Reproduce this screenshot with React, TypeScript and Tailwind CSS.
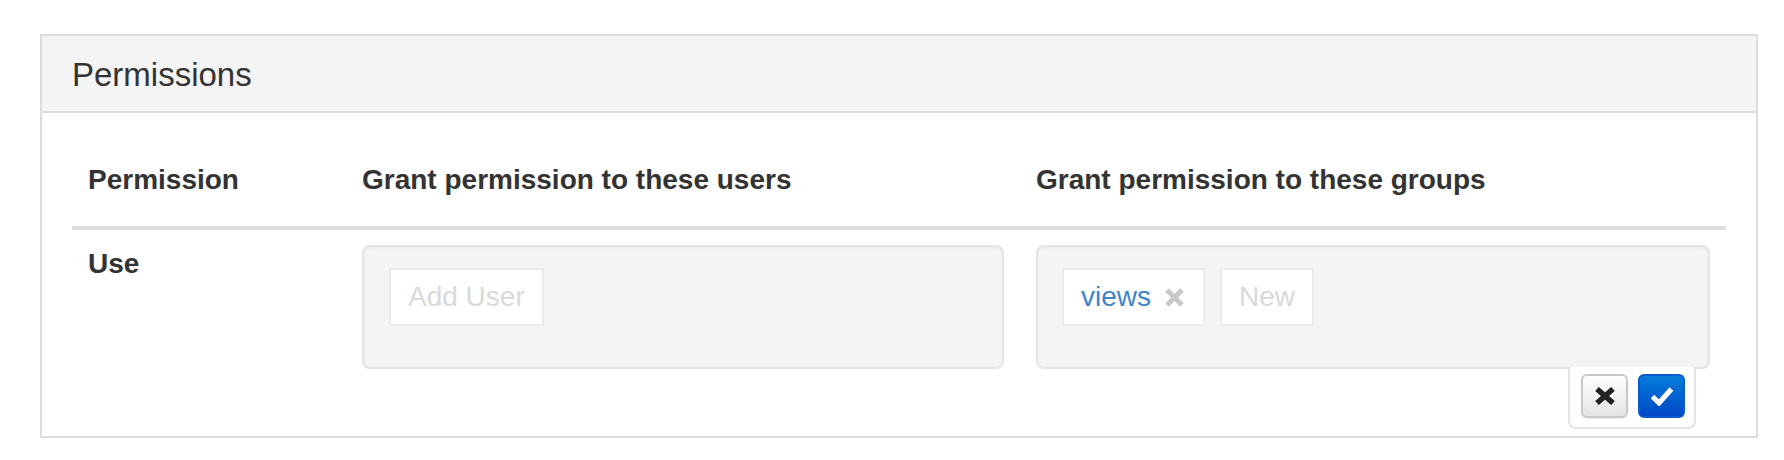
import React from "react";

const font = { fontFamily: '"Liberation Sans", Arial, sans-serif' };

function TagX() {
  return (
    <svg width="21" height="21" viewBox="0 0 21 21" className="shrink-0">
      <path d="M3 3 L18 18 M18 3 L3 18" stroke="#c9c9c9" strokeWidth="5" />
    </svg>
  );
}

function BoldX() {
  return (
    <svg width="22" height="18" viewBox="0 0 22 18">
      <path d="M3 2 L19 16 M19 2 L3 16" stroke="#222" strokeWidth="5.5" />
    </svg>
  );
}

function Check() {
  return (
    <svg width="24" height="20" viewBox="0 0 24 20">
      <path d="M2.5 10.5 L9 17 L21.5 3" stroke="#fff" strokeWidth="5" fill="none" strokeLinejoin="miter" />
    </svg>
  );
}

function InputChip({ children }: { children: React.ReactNode }) {
  return (
    <div className="h-[58px] flex items-center px-[17px] bg-white border-2 border-[#ebebeb] text-[28px] text-[#d9d9d9] leading-none">
      {children}
    </div>
  );
}

export default function App() {
  return (
    <div className="bg-white w-[1784px] h-[460px] pt-[34px] pl-[40px]" style={font}>
      <div className="w-[1718px] border-2 border-[#dddddd] text-[#333333]">
        <div className="bg-[#f4f4f4] border-b-2 border-[#dddddd] px-[30px] pt-[21px] pb-[19px]">
          <h3 className="text-[33px] leading-[35px]">Permissions</h3>
        </div>
        <div className="px-[30px] pt-[30px] pb-[51px]">
          <div className="grid grid-cols-[274px_674px_1fr] border-b-4 border-[#dddddd] text-[28px] leading-[40px] font-bold">
            <div className="px-[16px] pt-[17px] pb-[26px]">Permission</div>
            <div className="px-[16px] pt-[17px] pb-[26px]">Grant permission to these users</div>
            <div className="px-[16px] pt-[17px] pb-[26px]">Grant permission to these groups</div>
          </div>
          <div className="grid grid-cols-[274px_674px_1fr] text-[28px] leading-[40px]">
            <div className="px-[16px] pt-[14px] font-bold">Use</div>
            <div className="px-[16px] pt-[15px] pb-[16px]">
              <div className="h-[124px] bg-[#f4f4f4] border-2 border-[#e4e4e4] rounded-[8px] shadow-[inset_0_2px_2px_rgba(0,0,0,0.04)] pl-[25px] pt-[21px] flex items-start gap-[15px]">
                <InputChip>Add User</InputChip>
              </div>
            </div>
            <div className="px-[16px] pt-[15px] pb-[16px]">
              <div className="relative h-[124px] bg-[#f4f4f4] border-2 border-[#e4e4e4] rounded-[8px] shadow-[inset_0_2px_2px_rgba(0,0,0,0.04)] pl-[24px] pt-[21px] flex items-start gap-[15px]">
                <div className="h-[58px] flex items-center pl-[17px] pr-[18px] gap-[13px] bg-white border-2 border-[#ebebeb] text-[28px] text-[#3d85c6] leading-none">
                  <span>views</span>
                  <TagX />
                </div>
                <InputChip>New</InputChip>
                <div className="absolute top-full right-[12px] h-[62px] w-[128px] bg-white border-2 border-t-0 border-[#e4e4e4] rounded-b-[8px] pl-[11px] pt-[7px] flex gap-[10px]">
                  <button className="w-[47px] h-[44px] flex items-center justify-center rounded-[6px] border-2 border-[#c8c8c8] bg-gradient-to-b from-white to-[#e4e4e4] shadow-[0_1px_1px_rgba(0,0,0,0.08)]">
                    <BoldX />
                  </button>
                  <button className="w-[47px] h-[44px] flex items-center justify-center rounded-[6px] border-2 border-[#0a5ccc] bg-gradient-to-b from-[#0a7bd9] to-[#0047c6]">
                    <Check />
                  </button>
                </div>
              </div>
            </div>
          </div>
        </div>
      </div>
    </div>
  );
}
